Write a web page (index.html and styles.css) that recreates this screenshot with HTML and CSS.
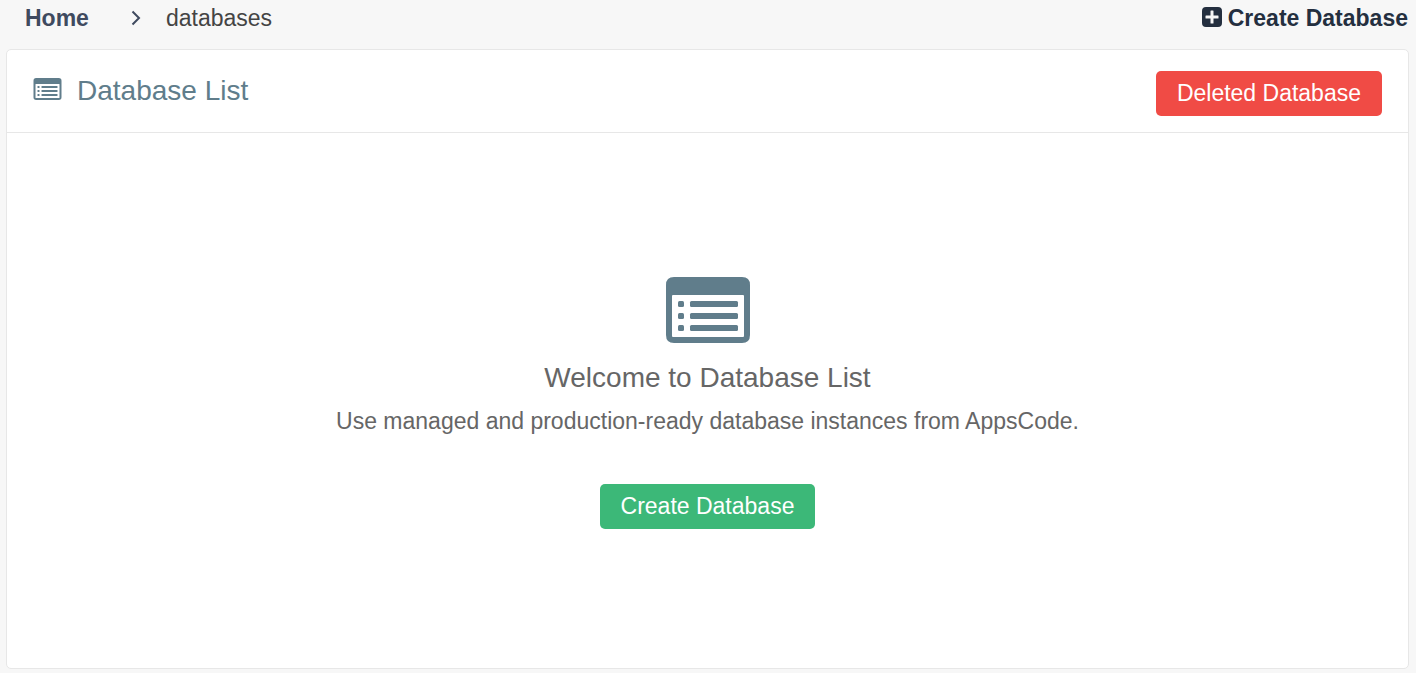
FILE: index.html
```
<!DOCTYPE html>
<html lang="en">
<head>
<meta charset="utf-8">
<title>Database List</title>
<link rel="stylesheet" href="styles.css">
</head>
<body>
<svg width="0" height="0" class="sprite" aria-hidden="true">
  <symbol id="list-alt" viewBox="0 0 84 66">
    <path fill-rule="evenodd" d="M8 0H76Q84 0 84 8V58Q84 66 76 66H8Q0 66 0 58V8Q0 0 8 0ZM7 18Q6 18 6 19V59Q6 60 7 60H77Q78 60 78 59V19Q78 18 77 18Z"/>
    <rect x="12" y="24" width="6" height="6" rx="1.5"/>
    <rect x="12" y="36" width="6" height="6" rx="1.5"/>
    <rect x="12" y="48" width="6" height="6" rx="1.5"/>
    <rect x="24" y="24" width="48" height="6" rx="1.5"/>
    <rect x="24" y="36" width="48" height="6" rx="1.5"/>
    <rect x="24" y="48" width="48" height="6" rx="1.5"/>
  </symbol>
</svg>
<header class="topbar">
  <nav class="crumbs" aria-label="Breadcrumb">
    <a class="home" href="#">Home</a>
    <svg class="chevron" viewBox="0 0 10 16" aria-hidden="true"><path d="M1.500 1.500L8 8L1.500 14.500"/></svg>
    <span class="current">databases</span>
  </nav>
  <a class="create-link" href="#">
    <svg class="plus" viewBox="0 0 20 20" aria-hidden="true"><path fill-rule="evenodd" d="M4 0H16Q20 0 20 4V16Q20 20 16 20H4Q0 20 0 16V4Q0 0 4 0ZM9 3.500Q8.500 3.500 8.500 4V8.500H4Q3.500 8.500 3.500 9V11Q3.500 11.500 4 11.500H8.500V16Q8.500 16.500 9 16.500H11Q11.500 16.500 11.500 16V11.500H16Q16.500 11.500 16.500 11V9Q16.500 8.500 16 8.500H11.500V4Q11.500 3.500 11 3.500Z"/></svg>
    <span>Create Database</span>
  </a>
</header>
<main class="panel">
  <div class="panel-head">
    <h1 class="title"><svg class="title-icon" aria-hidden="true"><use href="#list-alt"/></svg>Database List</h1>
    <button class="btn danger" type="button">Deleted Database</button>
  </div>
  <section class="empty">
    <svg class="empty-icon" aria-hidden="true"><use href="#list-alt"/></svg>
    <h2 class="welcome">Welcome to Database List</h2>
    <p class="lead">Use managed and production-ready database instances from AppsCode.</p>
    <button class="btn success" type="button">Create Database</button>
  </section>
</main>
</body>
</html>
```
FILE: styles.css
```
* { box-sizing: border-box; }
body {
  margin: 0;
  min-height: 100vh;
  display: flex;
  flex-direction: column;
  background: #f7f7f7;
  color: #666;
  font: 23px/26px "Liberation Sans", Arial, sans-serif;
}
.sprite { position: absolute; }
.topbar {
  display: flex;
  justify-content: space-between;
  align-items: center;
  padding: 5px 8px 18px 25px;
}
.crumbs { display: flex; align-items: center; }
.home { color: #3f4a5f; font-weight: bold; text-decoration: none; }
.chevron {
  width: 10px;
  height: 16px;
  margin: 0 25px 0 42px;
  fill: none;
  stroke: #3f4a5f;
  stroke-width: 2;
}
.current { color: #444; }
.create-link {
  display: flex;
  align-items: center;
  gap: 6px;
  color: #242f3f;
  font-weight: bold;
  text-decoration: none;
}
.plus { width: 20px; height: 20px; margin-bottom: 3px; fill: #242f3f; }
.panel {
  flex: 1;
  display: flex;
  flex-direction: column;
  margin: 0 7px 4px 6px;
  background: #fff;
  border: 1px solid #e7e7e7;
  border-radius: 5px;
}
.panel-head {
  display: flex;
  justify-content: space-between;
  align-items: center;
  padding: 21px 26px 16px;
  border-bottom: 1px solid #e7e7e7;
}
.title {
  display: flex;
  align-items: center;
  gap: 15px;
  margin: 0 0 6px;
  color: #607d8b;
  font-size: 28px;
  line-height: 32px;
  font-weight: normal;
}
.title-icon { width: 29px; height: 22px; margin-bottom: 3px; fill: #607d8b; }
.btn {
  padding: 9px 21px 10px;
  border: 0;
  border-radius: 5px;
  color: #fff;
  font: inherit;
  cursor: pointer;
}
.danger { background: #f04b45; }
.success { background: #3cb878; }
.empty {
  flex: 1;
  display: flex;
  flex-direction: column;
  align-items: center;
  justify-content: center;
  padding: 28px 20px 24px;
  text-align: center;
}
.empty-icon { width: 84px; height: 66px; fill: #607d8b; }
.welcome { margin: 19px 0 14px; font-size: 28px; line-height: 32px; font-weight: normal; }
.lead { margin: 0 0 50px; }
```
